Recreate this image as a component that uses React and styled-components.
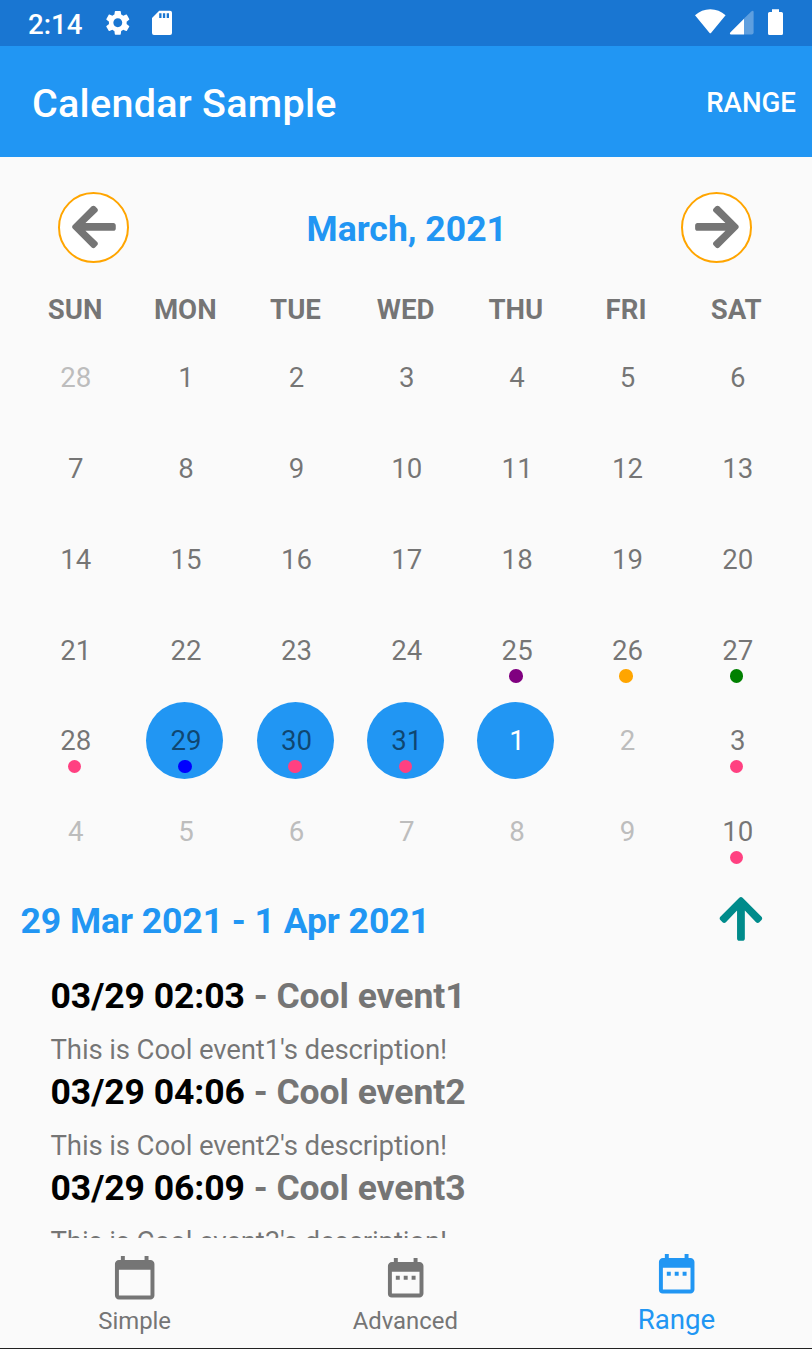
import React from 'react';
import styled, { createGlobalStyle } from 'styled-components';
import { FaArrowLeft, FaArrowRight, FaArrowUp } from 'react-icons/fa';
import { MdSettings, MdCalendarToday, MdDateRange } from 'react-icons/md';

const GlobalStyle = createGlobalStyle`
  * { box-sizing: border-box; }
  body { margin: 0; background: #fafafa; font-family: Roboto, "Liberation Sans", sans-serif; }
  svg { display: block; }
`;

const Screen = styled.div`
  width: 812px;
  height: 1349px;
  display: flex;
  flex-direction: column;
  overflow: hidden;
  background: #fafafa;
  color: rgba(0, 0, 0, 0.54);
  border-bottom: 1px solid #212121;
`;

const StatusBar = styled.div`
  height: 46px;
  flex: none;
  display: flex;
  justify-content: space-between;
  background: #1976d2;
  color: #fff;
  padding: 0 28px;
`;

const StatusGroup = styled.div`
  display: flex;
  align-items: flex-start;
  padding-top: ${(p) => p.$top}px;
`;

const Clock = styled.span`
  font-size: 27.66px;
  font-weight: 500;
  line-height: 32px;
  width: 75px;
  padding-top: 1px;
`;

const GearSlot = styled.span`
  width: 48.5px;
`;

const AppBar = styled.header`
  height: 111px;
  flex: none;
  display: flex;
  align-items: center;
  justify-content: space-between;
  padding: 4px 16px 0 32px;
  background: #2196f3;
  color: #fff;
`;

const Title = styled.h1`
  margin: 0;
  font-size: 39.5px;
  font-weight: 500;
  line-height: 46px;
  letter-spacing: 0.27px;
`;

const Action = styled.button`
  border: 0;
  padding: 0 0 1px;
  background: none;
  color: inherit;
  font: 500 27.66px/32px Roboto, sans-serif;
`;

const MonthBar = styled.div`
  flex: none;
  display: flex;
  align-items: center;
  justify-content: space-between;
  height: 71px;
  margin: 35px 59.5px 0 58px;
`;

const Month = styled.h2`
  margin: 2px 0 0 3px;
  color: #2196f3;
  font-size: 35.56px;
  font-weight: 700;
  line-height: 42px;
`;

const RoundButton = styled.button`
  width: 71px;
  height: 71px;
  display: flex;
  align-items: center;
  justify-content: center;
  padding: 0 0 1px;
  border: 2px solid #ffa500;
  border-radius: 50%;
  background: #fff;
  color: #757575;
`;

const Weekdays = styled.div`
  flex: none;
  display: grid;
  grid-template-columns: repeat(7, 110.2px);
  margin: 29px 0 0 20px;
  height: 40px;
`;

const Weekday = styled.div`
  text-align: center;
  font-size: 27.66px;
  font-weight: 700;
  line-height: 36px;
`;

const Grid = styled.div`
  flex: none;
  display: grid;
  grid-template-columns: repeat(7, 110.35px);
  grid-auto-rows: 90.8px;
  margin-left: 19.3px;
`;

const Day = styled.div`
  display: flex;
  align-items: center;
  justify-content: center;
`;

const DayCircle = styled.div`
  position: relative;
  width: 77px;
  height: 77px;
  display: flex;
  align-items: center;
  justify-content: center;
  border-radius: 50%;
  background: ${(p) => (p.$selected ? '#2196f3' : 'transparent')};
  color: ${(p) => (p.$white ? '#fff' : p.$muted ? '#bdbdbd' : 'inherit')};
  font-size: 27.66px;
  line-height: 32px;
  padding: 1.6px 0 0 2.6px;
`;

const Dot = styled.i`
  position: absolute;
  left: 31.7px;
  top: 57.8px;
  width: 13.6px;
  height: 13.6px;
  border-radius: 50%;
  background: ${(p) => p.$color};
`;

const RangeBar = styled.div`
  flex: none;
  height: 87.4px;
  display: flex;
  align-items: center;
  justify-content: space-between;
  padding: 0 46px 2.4px 20.5px;
  color: #008b8b;
`;

const RangeTitle = styled(Month)`
  margin: 4px 0 0;
  letter-spacing: -0.06px;
`;

const Events = styled.div`
  flex: 1;
  min-height: 0;
  overflow: hidden;
  padding: 10.9px 0 0 50.5px;
`;

const Event = styled.article`
  height: 96.2px;
`;

const EventName = styled.div`
  font-size: 35.56px;
  font-weight: 700;
  line-height: 42px;
  letter-spacing: -0.07px;
  color: #757575;
`;

const EventTime = styled.span`
  color: #000;
`;

const EventText = styled.div`
  margin-top: 17px;
  font-size: 27.66px;
  line-height: 32px;
  letter-spacing: -0.17px;
`;

const Tabs = styled.nav`
  flex: none;
  height: 110px;
  display: grid;
  grid-template-columns: repeat(3, 1fr);
  background: #fafafa;
`;

const Tab = styled.div`
  display: flex;
  flex-direction: column;
  align-items: center;
  justify-content: flex-end;
  padding: 0 ${(p) => (p.$active ? 0.3 : 1.4)}px ${(p) => (p.$active ? 11 : 12)}px 0;
  gap: ${(p) => (p.$active ? 5.7 : 4.9)}px;
  color: ${(p) => (p.$active ? '#2196f3' : '#757575')};
  font-size: ${(p) => (p.$active ? 27.66 : 23.9)}px;
  line-height: ${(p) => (p.$active ? 34 : 30)}px;
`;

const SdCard = () => (
  <svg width="21" height="26" viewBox="0 0 21 26">
    <path fill="#fff" fillRule="evenodd" d="M7.2.7H18a2 2 0 0 1 2 2V23a2 2 0 0 1-2 2H2a2 2 0 0 1-2-2V8ZM7.2 3.2v4.9h2.3V3.2Zm3.7 0v4.9h2.3V3.2Zm3.8 0v4.9H17V3.2Z" />
  </svg>
);

const Signals = () => (
  <svg width="89" height="28" viewBox="695 8 89 28">
    <path fill="#fff" d="M695 15.2Q701.5 9.2 710.3 9.2T725.6 15.2L711.2 32.7Q710.3 33.8 709.4 32.7Z" />
    <path fill="#fff" opacity=".3" d="M751.3 11.4Q753.6 10 753.6 12V32.6Q753.6 34.6 751.6 34.6H744V18.6Z" />
    <path fill="#fff" d="M744 18.8V34.6H731Q729 34.2 730.5 32.3Z" />
    <path fill="#fff" d="M772 9.3H779V12H781.4Q783 12 783 13.6V33.4Q783 35 781.4 35H769.6Q768 35 768 33.4V13.6Q768 12 769.6 12H772Z" />
  </svg>
);

const PINK = '#ff4081';
const dots = { 25: 'purple', 26: 'orange', 27: 'green', 28: PINK, 29: 'blue', 30: PINK, 31: PINK, 34: PINK, 41: PINK };

// Each cell is numbered by its offset from the last day of February.
const days = Array.from({ length: 42 }, (_, i) => ({
  key: i,
  label: i === 0 ? 28 : i > 31 ? i - 31 : i,
  selected: i >= 29 && i <= 32,
  white: i === 32,
  muted: (i === 0 || i > 31) && !dots[i],
  dot: dots[i],
}));

const events = [
  { time: '03/29 02:03', name: 'Cool event1' },
  { time: '03/29 04:06', name: 'Cool event2' },
  { time: '03/29 06:09', name: 'Cool event3' },
];

export default function App() {
  return (
    <Screen>
      <GlobalStyle />
      <StatusBar>
        <StatusGroup $top={8}>
          <Clock>2:14</Clock>
          <GearSlot><MdSettings size={29.6} /></GearSlot>
          <StatusGroup $top={2}><SdCard /></StatusGroup>
        </StatusGroup>
        <StatusGroup $top={8}><Signals /></StatusGroup>
      </StatusBar>
      <AppBar>
        <Title>Calendar Sample</Title>
        <Action>RANGE</Action>
      </AppBar>
      <MonthBar>
        <RoundButton aria-label="Previous month"><FaArrowLeft size={49.9} /></RoundButton>
        <Month>March, 2021</Month>
        <RoundButton aria-label="Next month"><FaArrowRight size={49.9} /></RoundButton>
      </MonthBar>
      <Weekdays>
        {['SUN', 'MON', 'TUE', 'WED', 'THU', 'FRI', 'SAT'].map((d) => <Weekday key={d}>{d}</Weekday>)}
      </Weekdays>
      <Grid>
        {days.map((d) => (
          <Day key={d.key}>
            <DayCircle $selected={d.selected} $white={d.white} $muted={d.muted}>
              {d.label}
              {d.dot && <Dot $color={d.dot} />}
            </DayCircle>
          </Day>
        ))}
      </Grid>
      <RangeBar>
        <RangeTitle>29 Mar 2021 - 1 Apr 2021</RangeTitle>
        <FaArrowUp size={49.9} />
      </RangeBar>
      <Events>
        {events.map((e) => (
          <Event key={e.name}>
            <EventName><EventTime>{e.time}</EventTime> - {e.name}</EventName>
            <EventText>This is {e.name}'s description!</EventText>
          </Event>
        ))}
      </Events>
      <Tabs>
        <Tab><MdCalendarToday size={47.4} />Simple</Tab>
        <Tab><MdDateRange size={47.4} />Advanced</Tab>
        <Tab $active><MdDateRange size={47.4} />Range</Tab>
      </Tabs>
    </Screen>
  );
}
